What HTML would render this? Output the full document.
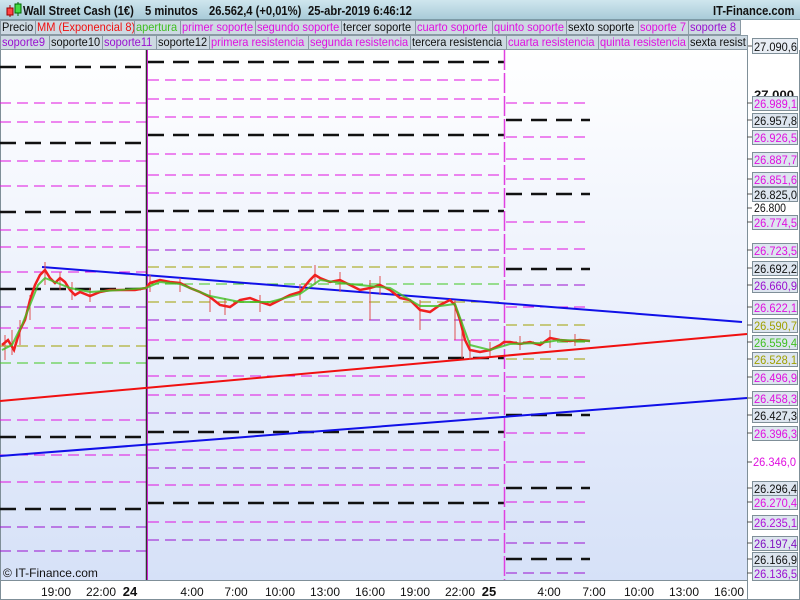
<!DOCTYPE html>
<html><head><meta charset="utf-8"><style>
*{margin:0;padding:0;box-sizing:border-box}
body{width:800px;height:600px;overflow:hidden;font-family:"Liberation Sans",sans-serif;background:#fff;position:relative}
#title{position:absolute;left:0;top:0;width:800px;height:20px;background:linear-gradient(#cfe6ee,#a9cbd8);border-bottom:1px solid #7d9aa6;font-size:13px;font-weight:bold;color:#111;z-index:2}
#title span{position:absolute;top:3px;white-space:nowrap;transform:scaleX(.86);transform-origin:left}
.row{position:absolute;left:0;height:15px;font-size:12px;z-index:2}
.row div{position:absolute;top:0;height:15px;line-height:13px;background:#cdd9e2;border:1px solid #8a9aa4;padding-left:1px;white-space:nowrap;overflow:hidden}
.row div span{display:inline-block;transform:scaleX(.92);transform-origin:left}
.bk{color:#111}.mg{color:#e010e0}.pp{color:#9a10d0}.gr{color:#3fbf20}.rd{color:#f01010}
svg{position:absolute;left:0;top:0}
</style></head><body>
<div id="title">
<svg width="20" height="20" style="left:4px;top:0"><line x1="6" y1="5" x2="6" y2="17" stroke="#900"/><rect x="3" y="8" width="6" height="7" fill="#f44" stroke="#900"/><line x1="14" y1="2" x2="14" y2="16" stroke="#060"/><rect x="11" y="4" width="6" height="9" fill="#4d4" stroke="#060"/></svg>
<span style="left:23px">Wall Street Cash (1€)</span><span style="left:145px">5 minutos</span><span style="left:209px">26.562,4 (+0,01%)</span><span style="left:308px">25-abr-2019 6:46:12</span><span style="left:713px">IT-Finance.com</span>
</div>
<div class="row" style="top:20px">
<div class="bk" style="left:0;width:36px"><span>Precio</span></div><div class="rd" style="left:35px;width:100px"><span>MM (Exponencial 8)</span></div><div class="gr" style="left:134px;width:47px"><span>apertura</span></div><div class="mg" style="left:180px;width:76px"><span>primer soporte</span></div><div class="mg" style="left:255px;width:87px"><span>segundo soporte</span></div><div class="bk" style="left:341px;width:75px"><span>tercer soporte</span></div><div class="mg" style="left:415px;width:78px"><span>cuarto soporte</span></div><div class="mg" style="left:492px;width:75px"><span>quinto soporte</span></div><div class="bk" style="left:566px;width:73px"><span>sexto soporte</span></div><div class="mg" style="left:638px;width:51px"><span>soporte 7</span></div><div class="pp" style="left:688px;width:53px"><span>soporte 8</span></div>
</div>
<div class="row" style="top:35px">
<div class="pp" style="left:0;width:50px"><span>soporte9</span></div><div class="bk" style="left:49px;width:54px"><span>soporte10</span></div><div class="pp" style="left:102px;width:55px"><span>soporte11</span></div><div class="bk" style="left:156px;width:54px"><span>soporte12</span></div><div class="mg" style="left:209px;width:100px"><span>primera resistencia</span></div><div class="mg" style="left:308px;width:103px"><span>segunda resistencia</span></div><div class="bk" style="left:410px;width:97px"><span>tercera resistencia</span></div><div class="mg" style="left:506px;width:93px"><span>cuarta resistencia</span></div><div class="mg" style="left:598px;width:91px"><span>quinta resistencia</span></div><div class="bk" style="left:688px;width:60px"><span>sexta resist</span></div>
</div>
<svg width="800" height="600">
<defs><linearGradient id="bg" x1="0" y1="0" x2="0" y2="1"><stop offset="0" stop-color="#ffffff"/><stop offset="1" stop-color="#d6e1f8"/></linearGradient></defs>
<rect x="0" y="50" width="747" height="530" fill="url(#bg)"/>
<line x1="747.5" y1="50" x2="747.5" y2="600" stroke="#7f8f98"/>
<line x1="0" y1="580.5" x2="748" y2="580.5" stroke="#7f8f98"/>
<line x1="0.5" y1="50" x2="0.5" y2="600" stroke="#7f8f98"/>
<line x1="0" y1="599.5" x2="800" y2="599.5" stroke="#7f8f98"/>
<line x1="799.5" y1="50" x2="799.5" y2="600" stroke="#7f8f98"/>
<g fill="none">
<g stroke="#e010e0" stroke-width="1" stroke-dasharray="11,6">
<path d="M0 103H146M0 122H146M0 161H146M0 186H146M0 230H146M0 247H146M0 272H146M0 328H146M0 420H146M0 455H146M0 482H146"/>
<path d="M148 80H504M148 99H504M148 117H504M148 154H504M148 175H504M148 193H504M148 230H504M148 340H504M148 376H504M148 395H504M148 450H504M148 485H504M148 522H504"/>
<path d="M506 103H590M506 137H590M506 159H590M506 179H590M506 222H590M506 249H590M506 307H590M506 377H590M506 398H590M506 433H590M506 462H590M506 502H590"/>
</g>
<g stroke="#9a10d0" stroke-dasharray="11,6">
<path d="M0 307H146M0 527H146M0 551H146M148 250H504M148 320H504M148 413H504M148 468H504M148 540H504M506 285H590M506 522H590M506 543H590M506 573H590"/>
</g>
<g stroke="#a0a000" stroke-dasharray="11,6"><path d="M0 346H146M148 267H504M148 302H504M506 325H590M506 359H590"/></g>
<g stroke="#40c820" stroke-dasharray="11,6"><path d="M0 363H146M148 284H504M506 342H590"/></g>
<g stroke="#111" stroke-width="2.5" stroke-dasharray="16,9">
<path d="M0 67H146M0 143H146M0 212H146M0 289H146M0 437H146M0 509H146"/>
<path d="M148 62H504M148 135H504M148 211H504M148 358H504M148 432H504M148 503H504"/>
<path d="M506 120H590M506 194H590M506 269H590M506 415H590M506 488H590M506 559H590"/>
</g>
<line x1="146.5" y1="50" x2="146.5" y2="580" stroke="#333" stroke-width="1.5"/>
<line x1="147.5" y1="50" x2="147.5" y2="580" stroke="#d020d0" stroke-width="1"/>
<line x1="504.5" y1="50" x2="504.5" y2="580" stroke="#e040e0" stroke-width="1.5" stroke-dasharray="20,3"/>
<line x1="42" y1="267" x2="742" y2="322" stroke="#1010e8" stroke-width="2"/>
<line x1="0" y1="401" x2="747" y2="334" stroke="#f01010" stroke-width="2"/>
<line x1="0" y1="456" x2="747" y2="398" stroke="#1010e8" stroke-width="2"/>
<path stroke="#e05050" stroke-width="1" d="M5 335V360M12 330V355M20 320V345M30 295V320M45 262V285M60 272V290M72 282V300M90 288V302M150 275V292M180 278V292M210 290V312M225 298V315M260 295V312M300 284V300M315 265V285M340 272V292M370 280V320M380 276V295M420 300V330M455 300V340M462 320V358M470 340V360M490 342V356M520 336V350M550 330V348M575 334V346"/>
<polyline stroke="#f02020" stroke-width="2.5" points="2,345 8,340 14,350 20,330 25,320 30,300 35,285 40,275 45,270 50,278 55,283 60,278 65,282 70,290 75,295 80,292 90,296 100,292 110,290 120,290 135,290 146,288 150,283 160,280 170,282 180,283 190,288 200,292 210,297 220,305 230,307 240,300 250,298 260,302 270,305 280,300 290,295 300,292 310,280 315,275 320,278 330,282 340,280 350,285 360,290 370,288 380,285 390,290 400,298 410,300 420,310 430,312 440,305 450,300 455,305 460,320 465,340 470,350 480,352 490,350 500,345 504,342 510,342 520,344 530,342 540,345 550,338 560,340 570,341 580,340 590,341"/>
<polyline stroke="#40c020" stroke-width="2" points="2,350 12,345 22,325 30,305 38,285 45,278 55,282 70,288 90,292 120,290 146,288 160,282 180,284 210,296 240,302 270,302 300,294 320,280 350,284 390,288 420,306 440,306 455,304 470,345 490,350 510,344 540,343 560,340 590,341" opacity="0.8"/>
</g>
<g font-size="12" font-family="Liberation Sans, sans-serif" fill="#111" text-anchor="middle">
<text x="56" y="596">19:00</text><text x="101" y="596">22:00</text><text x="130" y="596" font-weight="bold" font-size="13">24</text><text x="192" y="596">4:00</text><text x="236" y="596">7:00</text><text x="280" y="596">10:00</text><text x="325" y="596">13:00</text><text x="370" y="596">16:00</text><text x="415" y="596">19:00</text><text x="460" y="596">22:00</text><text x="489" y="596" font-weight="bold" font-size="13">25</text><text x="549" y="596">4:00</text><text x="594" y="596">7:00</text><text x="639" y="596">10:00</text><text x="684" y="596">13:00</text><text x="729" y="596">16:00</text>
</g>
<text x="3" y="577" font-size="12" fill="#111" font-family="Liberation Sans, sans-serif">© IT-Finance.com</text>
<g font-size="12" font-family="Liberation Sans, sans-serif">
<text x="754" y="99" font-weight="bold" fill="#111" textLength="40" lengthAdjust="spacingAndGlyphs">27.000</text>
<text x="754" y="212" fill="#111" textLength="32" lengthAdjust="spacingAndGlyphs">26.800</text>
<text x="753" y="466" fill="#e010e0" textLength="43" lengthAdjust="spacingAndGlyphs">26.346,0</text>
<rect x="752.5" y="38.5" width="45" height="15" fill="#e8edf4" stroke="#7f8f98"/><text x="754" y="51" fill="#111" textLength="43" lengthAdjust="spacingAndGlyphs">27.090,6</text>
<g stroke="#555"><path d="M747 46H752M747 103H752M747 120H752M747 137H752M747 159H752M747 179H752M747 194H752M747 208H752M747 222H752M747 250H752M747 268H752M747 285H752M747 307H752M747 325H752M747 342H752M747 359H752M747 377H752M747 398H752M747 415H752M747 433H752M747 462H752M747 488H752M747 502H752M747 522H752M747 543H752M747 559H752M747 573H752"/></g>
<g fill="#dde5ef" stroke="#7f8f98">
<rect x="752.5" y="96.5" width="45" height="14"/><rect x="752.5" y="113.5" width="45" height="14"/><rect x="752.5" y="130.5" width="45" height="14"/><rect x="752.5" y="152.5" width="45" height="14"/><rect x="752.5" y="172.5" width="45" height="14"/><rect x="752.5" y="187.5" width="45" height="14"/><rect x="752.5" y="215.5" width="45" height="14"/><rect x="752.5" y="243.5" width="45" height="14"/><rect x="752.5" y="261.5" width="45" height="14"/><rect x="752.5" y="278.5" width="45" height="14"/><rect x="752.5" y="300.5" width="45" height="14"/><rect x="752.5" y="318.5" width="45" height="14"/><rect x="752.5" y="335.5" width="45" height="14"/><rect x="752.5" y="352.5" width="45" height="14"/><rect x="752.5" y="370.5" width="45" height="14"/><rect x="752.5" y="391.5" width="45" height="14"/><rect x="752.5" y="408.5" width="45" height="14"/><rect x="752.5" y="426.5" width="45" height="14"/><rect x="752.5" y="481.5" width="45" height="14"/><rect x="752.5" y="495.5" width="45" height="14"/><rect x="752.5" y="515.5" width="45" height="14"/><rect x="752.5" y="536.5" width="45" height="14"/><rect x="752.5" y="552.5" width="45" height="14"/><rect x="752.5" y="566.5" width="45" height="14"/>
</g>
<g>
<text x="754" y="108" fill="#e010e0" textLength="43" lengthAdjust="spacingAndGlyphs">26.989,1</text><text x="754" y="125" fill="#111" textLength="43" lengthAdjust="spacingAndGlyphs">26.957,8</text><text x="754" y="142" fill="#e010e0" textLength="43" lengthAdjust="spacingAndGlyphs">26.926,5</text><text x="754" y="164" fill="#e010e0" textLength="43" lengthAdjust="spacingAndGlyphs">26.887,7</text><text x="754" y="184" fill="#e010e0" textLength="43" lengthAdjust="spacingAndGlyphs">26.851,6</text><text x="754" y="199" fill="#111" textLength="43" lengthAdjust="spacingAndGlyphs">26.825,0</text><text x="754" y="227" fill="#e010e0" textLength="43" lengthAdjust="spacingAndGlyphs">26.774,5</text><text x="754" y="255" fill="#e010e0" textLength="43" lengthAdjust="spacingAndGlyphs">26.723,5</text><text x="754" y="273" fill="#111" textLength="43" lengthAdjust="spacingAndGlyphs">26.692,2</text><text x="754" y="290" fill="#9a10d0" textLength="43" lengthAdjust="spacingAndGlyphs">26.660,9</text><text x="754" y="312" fill="#e010e0" textLength="43" lengthAdjust="spacingAndGlyphs">26.622,1</text><text x="754" y="330" fill="#a0a000" textLength="43" lengthAdjust="spacingAndGlyphs">26.590,7</text><text x="754" y="347" fill="#40c020" textLength="43" lengthAdjust="spacingAndGlyphs">26.559,4</text><text x="754" y="364" fill="#a0a000" textLength="43" lengthAdjust="spacingAndGlyphs">26.528,1</text><text x="754" y="382" fill="#e010e0" textLength="43" lengthAdjust="spacingAndGlyphs">26.496,9</text><text x="754" y="403" fill="#e010e0" textLength="43" lengthAdjust="spacingAndGlyphs">26.458,3</text><text x="754" y="420" fill="#111" textLength="43" lengthAdjust="spacingAndGlyphs">26.427,3</text><text x="754" y="438" fill="#e010e0" textLength="43" lengthAdjust="spacingAndGlyphs">26.396,3</text><text x="754" y="493" fill="#111" textLength="43" lengthAdjust="spacingAndGlyphs">26.296,4</text><text x="754" y="507" fill="#e010e0" textLength="43" lengthAdjust="spacingAndGlyphs">26.270,4</text><text x="754" y="527" fill="#b010d8" textLength="43" lengthAdjust="spacingAndGlyphs">26.235,1</text><text x="754" y="548" fill="#8010c0" textLength="43" lengthAdjust="spacingAndGlyphs">26.197,4</text><text x="754" y="564" fill="#111" textLength="43" lengthAdjust="spacingAndGlyphs">26.166,9</text><text x="754" y="578" fill="#9a10d0" textLength="43" lengthAdjust="spacingAndGlyphs">26.136,5</text>
</g>
</g>
</svg>
</body></html>
